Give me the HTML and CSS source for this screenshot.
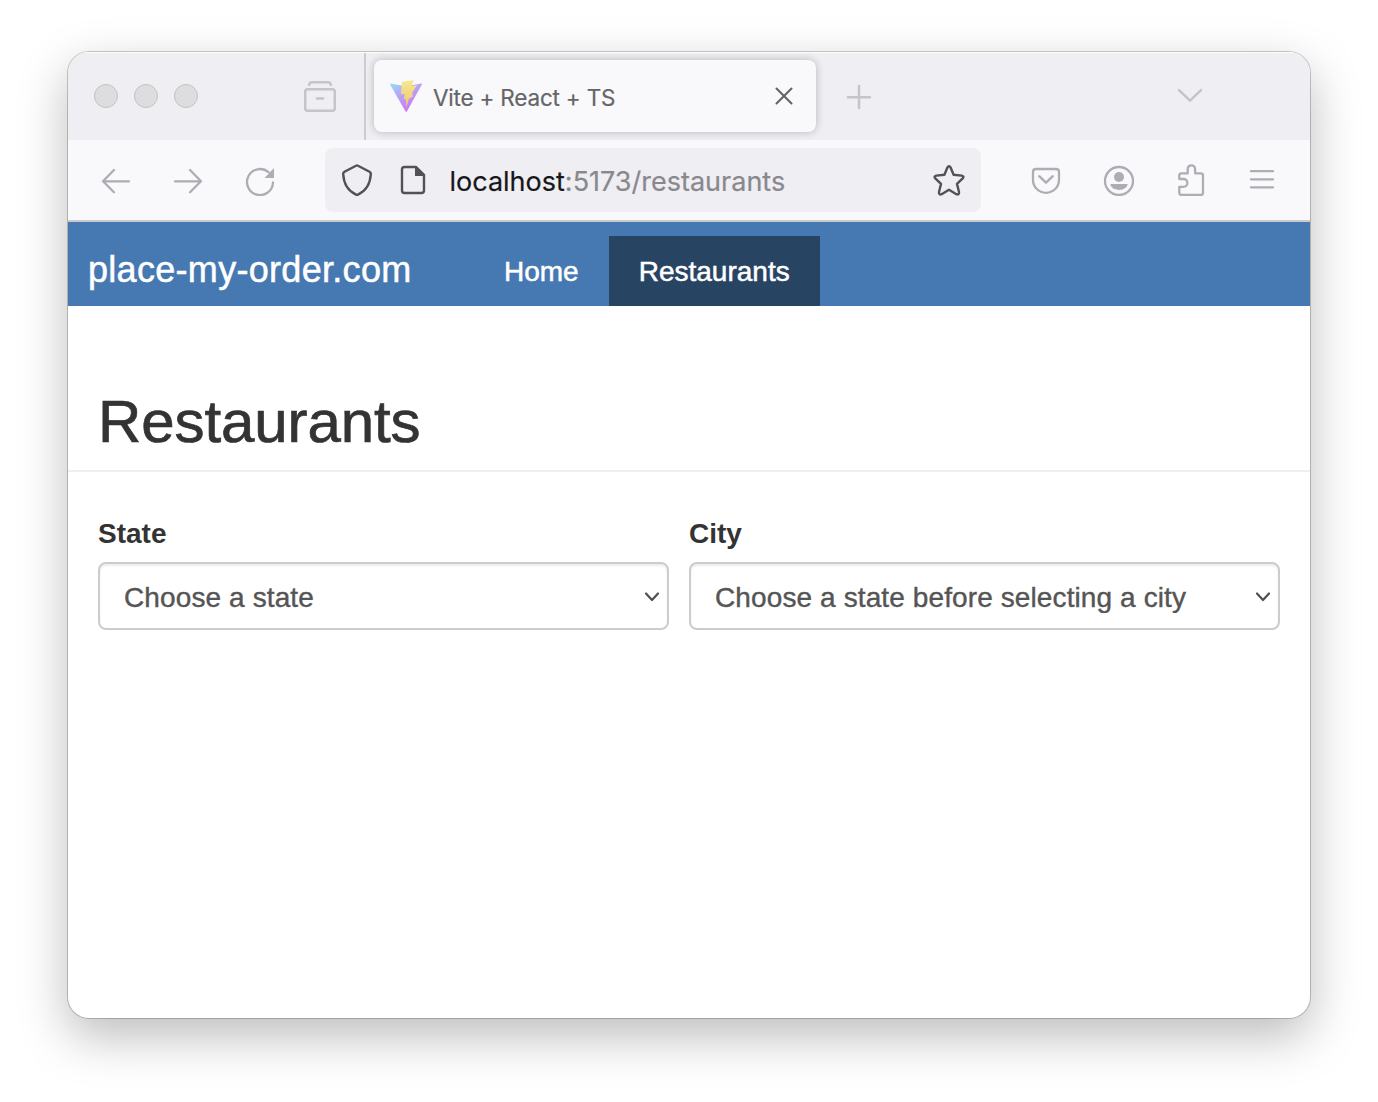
FILE: index.html
```html
<!DOCTYPE html>
<html lang="en">
<head>
<meta charset="utf-8">
<title>Vite + React + TS</title>
<link rel="stylesheet" href="styles.css">
</head>
<body>
<div class="window">
  <div class="tabbar">
    <div class="lights"><i></i><i></i><i></i></div>
    <svg class="icon pale recent" viewBox="0 0 32 32"><path d="M5 3.800Q5.800 1.300 8 1.300H24Q26.200 1.300 27 3.800"/><rect x="1.200" y="8.200" width="29.600" height="21.600" rx="2.500"/><path d="M13 17.500H19"/></svg>
    <div class="tab">
      <svg class="vite" viewBox="0 0 32 32">
        <defs>
          <linearGradient id="shell" x1="0" y1="0" x2=".55" y2="1"><stop offset="0" stop-color="#8fdcff"/><stop offset=".45" stop-color="#b4a0f5"/><stop offset="1" stop-color="#cc70f2"/></linearGradient>
          <linearGradient id="bolt" x1="0" y1="0" x2="0" y2="1"><stop offset="0" stop-color="#f8e888"/><stop offset="1" stop-color="#eec370"/></linearGradient>
        </defs>
        <path fill="url(#shell)" d="M.6 3.400 16 6.200 31.400 3.400Q32.400 3.500 31.900 4.500L17 31.300Q16.200 32.400 15.400 31.300L.1 4.500Q-.2 3.500 .6 3.400Z"/>
        <path fill="url(#bolt)" d="M12 2 23.600 0 21.600 6 26.800 5.200 22.300 12.600 22.800 16.800 19 18.500 16.300 27.500 15.900 19.500 13.800 18.800 14.600 14 10.800 14.300Z"/>
      </svg>
      <span class="tab-title">Vite + React + TS</span>
      <svg class="close" viewBox="0 0 18 18"><path d="M1.500 1.500 16.500 16.500M16.500 1.500 1.500 16.500"/></svg>
    </div>
    <svg class="icon pale plus" viewBox="0 0 32 32"><path d="M16 5V27M5 16.200H27"/></svg>
    <svg class="icon pale chevron" viewBox="0 0 32 32"><path d="M5 10.200 16 20.700 27 10.200"/></svg>
  </div>
  <div class="toolbar">
    <svg class="icon" viewBox="0 0 32 32"><path d="M29 17.300H3M14 6 3 17.300 14 28.300"/></svg>
    <svg class="icon" viewBox="0 0 32 32"><path d="M3 17.300H29M18 6 29 17.300 18 28.300"/></svg>
    <svg class="icon" viewBox="0 0 32 32"><path d="M29 18.500A13 13 0 1 1 24.500 8.200"/><path class="solid" d="M30 4V14H20.500Z"/></svg>
    <div class="urlbar">
      <svg class="icon dark" viewBox="0 0 32 32"><path d="M15 1.700Q16 1.100 17 1.700L28.500 7.700Q30 8.500 29.800 10.300C29.200 20 25 27 17 30.600Q16 31 15 30.600C7 27 2.800 20 2.200 10.300Q2 8.500 3.500 7.700Z"/></svg>
      <svg class="icon dark page" viewBox="0 0 32 32"><path d="M19 3H7.500Q5 3 5 5.500V26.500Q5 29 7.500 29H24.500Q27 29 27 26.500V11Z"/><path class="solid" d="M18 2H19.500L28 10.500V12H18Z"/></svg>
      <div class="url">localhost<span>:5173/restaurants</span></div>
      <svg class="icon dark" viewBox="0 0 32 32"><path d="M14.300 3.700Q16 .700 17.700 3.700L20.600 10.700 28.700 11.600Q31.500 12.300 29.700 14.400L24 19.900 26 28Q26.300 31.300 23.400 30.200L16 25.800 8.600 30.200Q5.700 31.300 6 28L8 19.900 2.300 14.400Q.500 12.300 3.300 11.600L11.400 10.700Z"/></svg>
    </div>
    <svg class="icon" viewBox="0 0 32 32"><path d="M6 5H26Q29 5 29 8V16A13 12.800 0 0 1 3 16V8Q3 5 6 5Z"/><path d="M9.200 12.200 16 18.700 22.800 12.200"/></svg>
    <svg class="icon account" viewBox="0 0 32 32"><circle cx="16" cy="17" r="14"/><circle class="solid" cx="16" cy="13" r="5"/><path class="solid" d="M8 20H24Q25 20 24.500 21C22 27.600 10 27.600 7.500 21Q7 20 8 20Z"/></svg>
    <svg class="icon puzzle" viewBox="0 0 32 32"><path d="M4.300 15V11.500Q4.300 9.300 6.500 9.300H12.700V5A3.700 3.700 0 0 1 20.100 5V9.300H25.800Q28 9.300 28 11.500V28.800Q28 31 25.800 31H6.500Q4.300 31 4.300 28.800V22.800H8.500A3.900 3.900 0 0 0 8.500 15Z"/></svg>
    <svg class="icon menu" viewBox="0 0 32 32"><path d="M5 7.200H27M5 15.300H27M5 23.300H27"/></svg>
  </div>
  <nav class="navbar">
    <a class="brand">place-my-order.com</a>
    <a class="link">Home</a>
    <a class="link active">Restaurants</a>
  </nav>
  <main>
    <h1>Restaurants</h1>
    <form class="fields">
      <div class="field">
        <label for="state">State</label>
        <div class="select"><select id="state"><option>Choose a state</option></select><svg viewBox="0 0 16 12"><path d="M2 2.500 8 9 14 2.500"/></svg></div>
      </div>
      <div class="field">
        <label for="city">City</label>
        <div class="select"><select id="city"><option>Choose a state before selecting a city</option></select><svg viewBox="0 0 16 12"><path d="M2 2.500 8 9 14 2.500"/></svg></div>
      </div>
    </form>
  </main>
</div>
</body>
</html>
```
FILE: styles.css
```css
* { box-sizing: border-box; }
body {
  margin: 0;
  padding: 52px 68px 84px;
  height: 1102px;
  overflow: hidden;
  background: #fff;
  color: #333;
  font-family: "Liberation Sans", Arial, sans-serif;
  font-size: 28px;
}
.window {
  height: 966px;
  border-radius: 21px;
  overflow: hidden;
  background: #fff;
  box-shadow: 0 0 0 1px rgba(0,0,0,.2), 0 18px 50px rgba(0,0,0,.27);
}
.icon {
  width: 32px;
  height: 32px;
  flex: none;
  fill: none;
  stroke: #aeacb4;
  stroke-width: 2.300;
  stroke-linecap: round;
  stroke-linejoin: round;
}
.icon .solid { fill: #aeacb4; stroke: none; }
.dark { stroke: #515156; stroke-width: 2.400; }
.dark .solid { fill: #515156; }
.pale { stroke: #c5c4c9; stroke-width: 2.500; }

.tabbar {
  display: flex;
  align-items: center;
  height: 88px;
  background: #efeef3;
  box-shadow: inset 0 2px 1px -1px #fff;
}
.lights { display: flex; gap: 16px; margin-left: 26px; }
.lights i {
  width: 24px;
  height: 24px;
  border: 1px solid #c2c2c4;
  border-radius: 50%;
  background: #dddddf;
}
.recent { margin-left: 106px; margin-top: 2px; }
.tab {
  position: relative;
  display: flex;
  align-items: center;
  width: 442px;
  height: 72px;
  margin-left: 38px;
  padding: 0 23px 0 16px;
  border-radius: 8px;
  background: #f9f9fb;
  box-shadow: 0 0 8px rgba(0,0,0,.24);
}
.tab::before {
  content: "";
  position: absolute;
  left: -10px;
  top: -7px;
  width: 2px;
  height: 87px;
  background: #cbcbd0;
}
.vite { width: 32px; height: 32px; opacity: .95; }
.tab-title {
  flex: 1;
  margin-left: 11px;
  padding-top: 3px;
  color: #656569;
  font: 22.500px Inter, sans-serif;
  letter-spacing: -.2px;
  -webkit-text-stroke: .2px;
}
.close { width: 18px; height: 18px; fill: none; stroke: #656569; stroke-width: 2.100; stroke-linecap: round; }
.plus { margin-left: 27px; margin-top: 2px; }
.chevron { margin-left: auto; margin-right: 104px; }

.toolbar {
  display: flex;
  align-items: center;
  gap: 40px;
  height: 82px;
  padding: 0 32px;
  border-bottom: 2px solid #cbcbcd;
  background: #f9f9fb;
}
.urlbar {
  display: flex;
  align-items: center;
  width: 656px;
  height: 64px;
  margin: 0 9px;
  padding: 0 16px;
  border-radius: 8px;
  background: #efeef3;
}
.page { margin-left: 24px; }
.url {
  flex: 1;
  margin-left: 20.500px;
  padding-top: 2px;
  color: #17171b;
  font: 27px Inter, sans-serif;
  white-space: nowrap;
  -webkit-text-stroke: .2px;
}
.url span { color: #88888d; }
.account { margin-left: 1px; }
.menu { margin-left: -1px; }

.navbar {
  display: flex;
  align-items: flex-end;
  height: 84px;
  background: #4679b2;
  color: #fff;
  -webkit-text-stroke: .5px;
}
.brand {
  width: 406px;
  padding-left: 20px;
  font-size: 36px;
  line-height: 72px;
  letter-spacing: .3px;
}
.link { padding: 1px 30px 0; line-height: 70px; height: 70px; }
.active { background: #284463; }

h1 {
  height: 166px;
  margin: 0;
  padding: 83px 30px 0;
  border-bottom: 2px solid #eee;
  font-size: 60px;
  font-weight: 400;
  line-height: 66px;
  letter-spacing: -.1px;
  -webkit-text-stroke: .7px;
}
.fields {
  display: grid;
  grid-template-columns: 571px 591px;
  gap: 20px;
  padding: 42px 30px 0;
}
label {
  display: block;
  height: 48px;
  line-height: 40px;
  font-weight: 700;
}
.select { position: relative; }
.select select {
  appearance: none;
  display: block;
  width: 100%;
  height: 68px;
  padding: 2px 24px 0;
  border: 2px solid #ccc;
  border-radius: 8px;
  background: #fff;
  box-shadow: inset 0 2px 2px rgba(0,0,0,.075);
  color: #555;
  font: inherit;
  letter-spacing: .11px;
  -webkit-text-stroke: .4px;
}
.select svg {
  position: absolute;
  right: 9px;
  top: 29px;
  width: 16px;
  height: 12px;
  fill: none;
  stroke: #4f4f4f;
  stroke-width: 2.200;
  stroke-linecap: round;
  stroke-linejoin: round;
}
```
